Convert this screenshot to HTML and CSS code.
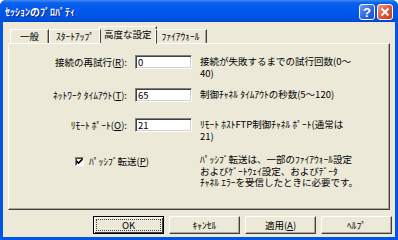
FILE: index.html
```html
<!DOCTYPE html>
<html lang="ja">
<head>
    <meta charset="UTF-8">
    <title>ｾｯｼｮﾝのﾌﾟﾛﾊﾟﾃｨ</title>
    <link rel="stylesheet" href="styles.css">
</head>
<body>
    <div class="window">
        <div class="titlebar">
            <span class="title">ｾｯｼｮﾝのﾌﾟﾛﾊﾟﾃｨ</span>
            <div class="caption-buttons">
                <span class="cap help">?</span>
                <span class="cap close">
                    <svg width="10" height="10" viewBox="0 0 10 10"><path d="M1.5 1.5L8.5 8.5M8.5 1.5L1.5 8.5" stroke="#fff" stroke-width="2"/></svg>
                </span>
            </div>
        </div>

        <div class="client">
            <div class="tabs">
                <div class="tab first">一般</div>
                <div class="tab">ｽﾀｰﾄｱｯﾌﾟ</div>
                <div class="tab active">高度な設定</div>
                <div class="tab">ﾌｧｲｱｳｫｰﾙ</div>
            </div>

            <div class="panel">
                <div class="form-grid">
                    <label class="field-label">接続の再試行(<u>R</u>):</label>
                    <div class="textbox">0</div>
                    <p class="desc">接続が失敗するまでの試行回数(0～<br>40)</p>

                    <label class="field-label">ﾈｯﾄﾜｰｸ ﾀｲﾑｱｳﾄ(<u>T</u>):</label>
                    <div class="textbox">65</div>
                    <p class="desc">制御ﾁｬﾈﾙ ﾀｲﾑｱｳﾄの秒数(5～120)</p>

                    <label class="field-label">ﾘﾓｰﾄ ﾎﾟｰﾄ(<u>O</u>):</label>
                    <div class="textbox">21</div>
                    <p class="desc">ﾘﾓｰﾄ ﾎｽﾄFTP制御ﾁｬﾈﾙ ﾎﾟｰﾄ(通常は<br>21)</p>

                    <label class="check">
                        <span class="checkbox">
                            <svg width="7" height="7" viewBox="0 0 7 7"><path d="M0.5 3L2.5 5L6.5 1" stroke="#000" stroke-width="1.6" fill="none"/></svg>
                        </span>
                        <span>ﾊﾟｯｼﾌﾞ転送(<u>P</u>)</span>
                    </label>
                    <p class="desc">ﾊﾟｯｼﾌﾞ転送は、一部のﾌｧｲｱｳｫｰﾙ設定<br>およびｹﾞｰﾄｳｪｲ設定、およびﾃﾞｰﾀ<br>ﾁｬﾈﾙ ｴﾗｰを受信したときに必要です。</p>
                </div>
            </div>

            <div class="buttons">
                <button class="btn default"><span>OK</span></button>
                <button class="btn">ｷｬﾝｾﾙ</button>
                <button class="btn">適用(<u>A</u>)</button>
                <button class="btn">ﾍﾙﾌﾟ</button>
            </div>
        </div>
    </div>
</body>
</html>
```

FILE: styles.css
```css
body {
    margin: 0;
    background-color: #ffffff;
    font-family: "Noto Sans CJK JP", "Liberation Sans", sans-serif;
    font-size: 9.5px;
    color: #000000;
}
.window {
    width: 398px;
    height: 240px;
    box-sizing: border-box;
    background-color: #0055e5;
    border-radius: 6px 6px 0 0;
    display: flex;
    flex-direction: column;
    overflow: hidden;
}
.titlebar {
    height: 22px;
    flex-shrink: 0;
    display: flex;
    align-items: center;
    justify-content: space-between;
    padding: 0 5px 0 5px;
    background: linear-gradient(#3a8cf6 0, #0a5fea 3px, #0058ee 45%, #0054e3 80%, #0047d0 100%);
}
.title {
    color: #ffffff;
    font-weight: bold;
    font-size: 10px;
    text-shadow: 1px 1px 0 #0a1e80;
}
.caption-buttons {
    display: flex;
    gap: 2px;
    margin-top: 2px;
}
.cap {
    width: 16px;
    height: 16px;
    box-sizing: border-box;
    border: 1px solid #ffffff;
    border-radius: 3px;
    display: flex;
    align-items: center;
    justify-content: center;
    color: #ffffff;
    font-family: "Liberation Sans", sans-serif;
    font-weight: bold;
    font-size: 13px;
}
.help {
    background: linear-gradient(135deg, #6d9cf8, #2a63e0 60%, #1d4fcc);
}
.close {
    background: linear-gradient(135deg, #f09a7e, #e0533a 55%, #c93a1f);
}
.client {
    flex: 1;
    margin: 0 3px 3px;
    background-color: #ece9d8;
    padding-top: 5px;
    display: flex;
    flex-direction: column;
}
.tabs {
    display: flex;
    align-items: flex-end;
    height: 16px;
    padding-left: 7px;
    position: relative;
    z-index: 1;
}
.tab {
    height: 13px;
    line-height: 13px;
    padding: 0 6px;
    border-top: 1px solid #ffffff;
    border-left: 1px solid #ffffff;
    border-right: 1px solid #404040;
    box-shadow: inset -1px 0 0 #aca899;
}
.tab.first {
    padding: 0 9px;
}
.tab.active {
    height: 16px;
    line-height: 15px;
    padding: 0 4px;
    margin: 0 -2px -1px;
    border-bottom: 1px solid #ece9d8;
}
.panel {
    margin: 0 5px;
    height: 167px;
    box-sizing: border-box;
    border-top: 1px solid #ffffff;
    border-left: 1px solid #ffffff;
    border-right: 1px solid #404040;
    border-bottom: 1px solid #404040;
    box-shadow: inset -1px -1px 0 #aca899;
    padding-top: 11px;
}
.form-grid {
    display: grid;
    grid-template-columns: 118px 57px 160px;
    grid-template-rows: 33px 30px 35px auto;
    column-gap: 8px;
}
.field-label {
    text-align: right;
    height: 14px;
    line-height: 14px;
}
.textbox {
    height: 14px;
    box-sizing: border-box;
    background-color: #ffffff;
    border-top: 1px solid #808080;
    border-left: 1px solid #808080;
    border-right: 1px solid #ffffff;
    border-bottom: 1px solid #ffffff;
    box-shadow: inset 1px 1px 0 #404040, inset -1px -1px 0 #d4d0c8;
    padding-left: 2px;
    line-height: 12px;
}
.desc {
    margin: 1px 0 0;
    line-height: 11.5px;
}
.check {
    grid-column: 1 / 3;
    display: flex;
    align-items: center;
    gap: 5px;
    padding-left: 66px;
    height: 14px;
    margin-top: 1px;
}
.checkbox {
    width: 9px;
    height: 9px;
    box-sizing: border-box;
    background-color: #ffffff;
    border-top: 1px solid #808080;
    border-left: 1px solid #808080;
    border-right: 1px solid #ffffff;
    border-bottom: 1px solid #ffffff;
    box-shadow: inset 1px 1px 0 #404040;
    display: flex;
    align-items: center;
    justify-content: center;
}
.buttons {
    display: flex;
    justify-content: flex-end;
    gap: 5px;
    padding: 6px 3px 0 0;
}
.btn {
    width: 71px;
    height: 18px;
    box-sizing: border-box;
    margin: 0;
    padding: 0;
    font: inherit;
    background-color: #ece9d8;
    border-top: 1px solid #ffffff;
    border-left: 1px solid #ffffff;
    border-right: 1px solid #404040;
    border-bottom: 1px solid #404040;
    box-shadow: inset -1px -1px 0 #aca899;
}
.btn.default {
    border: 1px solid #000000;
    box-shadow: inset 1px 1px 0 #ffffff, inset -1px -1px 0 #404040;
    padding: 2px;
}
.btn.default span {
    display: block;
    height: 100%;
    border: 1px dotted #404040;
    box-sizing: border-box;
    line-height: 10px;
}
```
